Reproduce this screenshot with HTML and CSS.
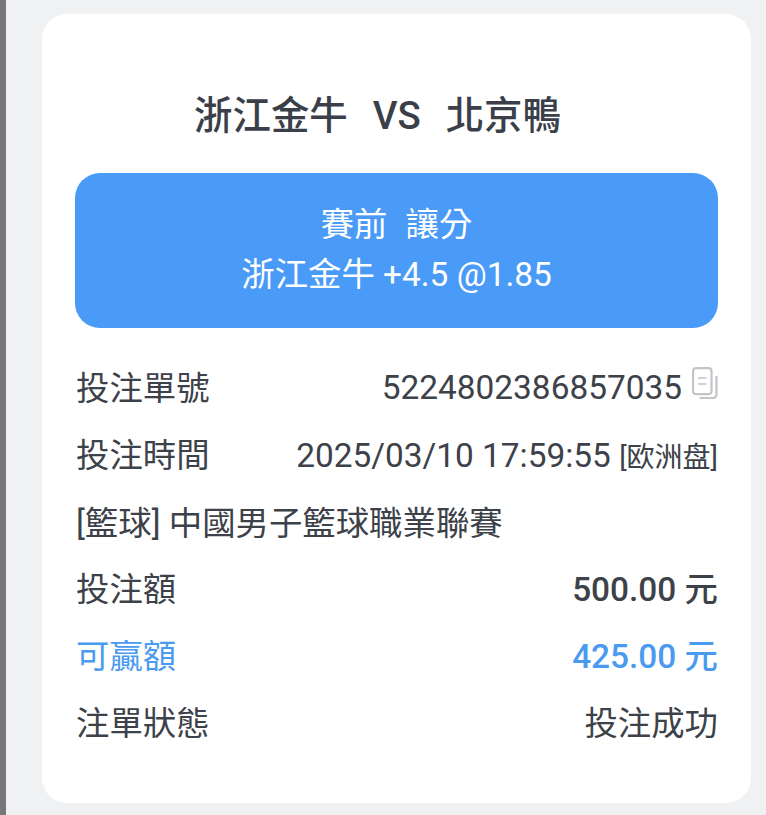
FILE: index.html
```html
<!DOCTYPE html>
<html lang="zh-Hant">
<head>
<meta charset="utf-8">
<title>注單詳情</title>
<link rel="stylesheet" href="styles.css">
</head>
<body>
<div class="edge"></div>
<main class="page">
  <section class="card">
    <h1 class="match"><span>浙江金牛</span><span>VS</span><span>北京鴨</span></h1>
    <div class="pick">
      <div class="pick-line"><span>賽前</span><span>讓分</span></div>
      <div class="pick-line">浙江金牛 +4.5 @1.85</div>
    </div>
    <div class="rows">
      <div class="row">
        <span>投注單號</span>
        <span class="value-icon"><span class="numeric">5224802386857035</span>
          <svg class="copy" viewBox="0 0 26 32" width="26" height="32" fill="none" stroke="#c2c4c8" stroke-width="2.200">
            <path d="M3.500 1.200h13a3 3 0 0 1 3 3v20a3 3 0 0 1-3 3h-13a3 3 0 0 1-2.500-3v-20a3 3 0 0 1 2.500-3z"/>
            <path d="M6 11h8.500M6 17h8.500" stroke-width="1.600"/>
            <path d="M24.500 9v18.500a3.500 3.500 0 0 1-3.500 3.500H7.500"/>
          </svg>
        </span>
      </div>
      <div class="row">
        <span>投注時間</span>
        <span class="numeric">2025/03/10 17:59:55 <small class="market">[欧洲盘]</small></span>
      </div>
      <div class="row"><span class="league">[籃球] 中國男子籃球職業聯賽</span></div>
      <div class="row">
        <span>投注額</span>
        <strong>500.00 元</strong>
      </div>
      <div class="row win">
        <span>可贏額</span>
        <strong>425.00 元</strong>
      </div>
      <div class="row">
        <span>注單狀態</span>
        <span>投注成功</span>
      </div>
    </div>
  </section>
</main>
</body>
</html>
```
FILE: styles.css
```css
* { box-sizing: border-box; }

html, body {
  margin: 0;
  height: 815px;
  overflow: hidden;
}

body {
  display: flex;
  background: #f0f1f3;
  color: #3d4149;
  font-family: Roboto, "Noto Sans CJK TC", sans-serif;
}

.edge {
  width: 6px;
  flex: none;
  background: #77777a;
}

.page {
  flex: 1;
  padding: 14px 15px 12px 36px;
}

.card {
  height: 789px;
  padding: 0 33px;
  background: #fff;
  border-radius: 25px;
}

.match {
  display: flex;
  justify-content: center;
  gap: 25px;
  margin: 0;
  padding: 76px 38px 0 0;
  height: 159px;
  font-size: 38.400px;
  line-height: 52px;
  font-weight: 500;
  color: #3a3f4a;
}

.pick {
  height: 155px;
  padding-top: 27px;
  background: #4a9af7;
  border-radius: 25px;
  color: #fff;
  font-size: 33.400px;
  line-height: 50px;
  text-align: center;
}

.pick-line span + span { margin-left: 18px; }

.rows {
  padding-top: 24px;
}

.row {
  display: flex;
  justify-content: space-between;
  align-items: center;
  height: 67px;
  padding-left: 1px;
  font-size: 33.400px;
  white-space: nowrap;
}

.row strong { font-weight: 500; }

.numeric { padding-top: 4px; }

.league { padding-top: 2px; }

.value-icon {
  display: flex;
  align-items: center;
  gap: 10px;
}

.copy {
  height: 32px;
  margin: -8px 0 -2px;
}

.market { font-size: 28px; }

.win { color: #4a9af0; }
```
